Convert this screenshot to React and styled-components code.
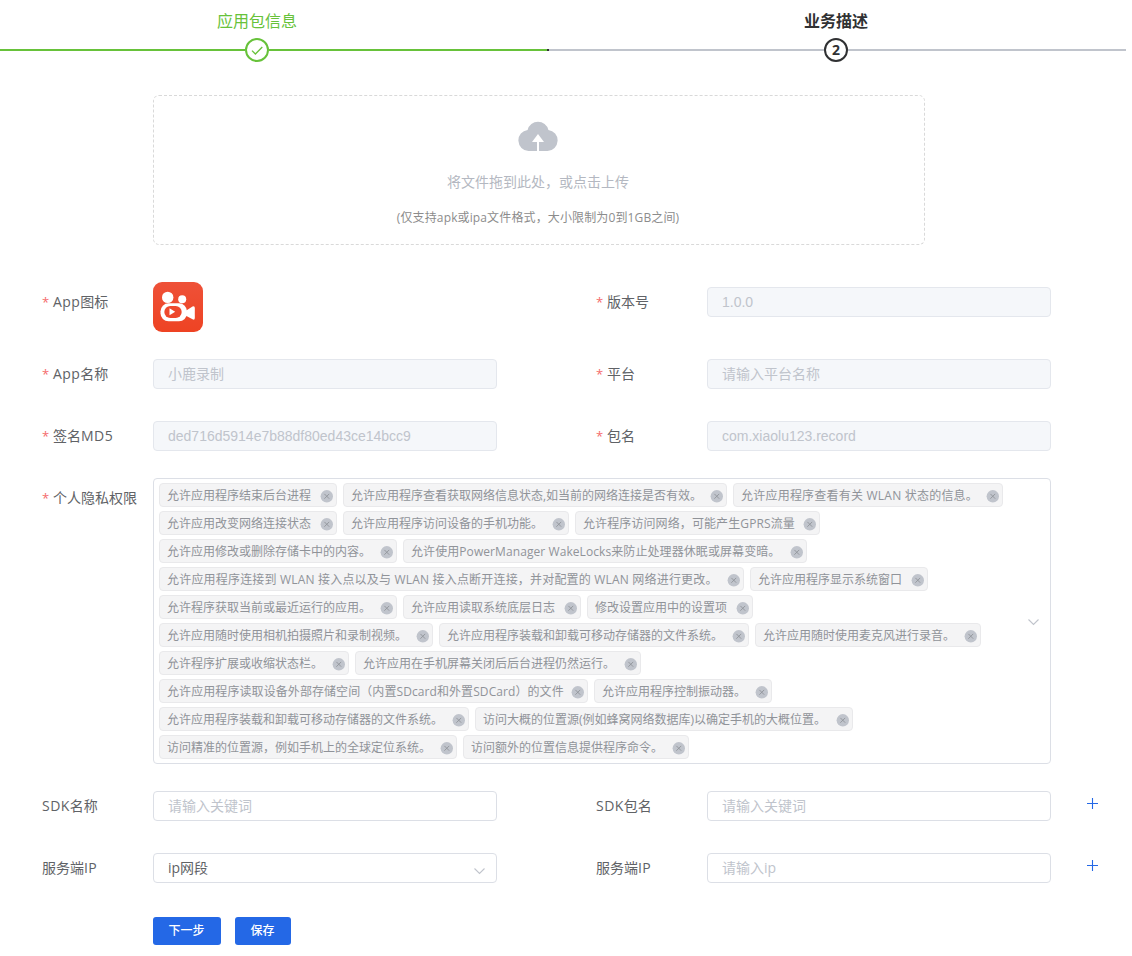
import React from 'react'
import styled, { createGlobalStyle, css } from 'styled-components'

const GlobalStyle = createGlobalStyle`
    * {
      box-sizing: border-box;
    }
    body {
      margin: 0;
      background: #fff;
      color: #606266;
      font-family: "Open Sans", "Noto Sans CJK SC", sans-serif;
      font-size: 14px;
      overflow: hidden;
    }
`

const Page = styled.div`
    width: 1132px;
    height: 956px;
    overflow: hidden;
`

const Steps = styled.div`
    display: flex;
    width: 1158px;
    height: 95px;
    margin-left: -32px;
    padding-top: 9px;
`

const Step = styled.div`
    width: 579px;
    display: flex;
    flex-direction: column;
    align-items: center;
    color: ${(props) => (props.$done ? '#67c23a' : '#303133')};
`

const StepTitle = styled.div`
    height: 24px;
    line-height: 24px;
    padding-right: 1px;
    font-size: 16px;
    font-weight: ${(props) => (props.$bold ? 700 : 400)};
`

const StepTrack = styled.div`
    width: 100%;
    height: 24px;
    margin-top: 5px;
    display: flex;
    align-items: center;
`

const StepLine = styled.div`
    width: ${(props) => (props.$lead ? 277 : 278)}px;
    height: 2px;
    background: ${(props) => (props.$done ? '#67c23a' : '#c0c4cc')};
    border-left: ${(props) => (props.$edge ? '2px solid #303133' : 'none')};
`

const StepCircle = styled.div`
    width: 24px;
    height: 24px;
    border: 2px solid currentColor;
    border-radius: 50%;
    display: flex;
    align-items: center;
    justify-content: center;
    font-size: 14px;
    font-weight: 700;
    line-height: 1;
`

const Upload = styled.div`
    width: 772px;
    height: 150px;
    margin-left: 153px;
    padding-right: 2px;
    border: 1px dashed #d9d9d9;
    border-radius: 6px;
    display: flex;
    flex-direction: column;
    align-items: center;
    svg {
      margin-top: 25px;
    }
`

const UploadText = styled.div`
    margin-top: 20px;
    line-height: 20px;
    color: #b4b8c1;
`

const UploadTip = styled.div`
    margin-top: 16px;
    line-height: 20px;
    font-size: 12px;
    letter-spacing: 0.13px;
    color: #8c8c8c;
`

const Form = styled.div`
    padding: 42px 0 0 42px;
`

const Row = styled.div`
    display: grid;
    grid-template-columns: 111px 344px 99px 111px 344px 40px;
    height: 30px;
    margin-bottom: ${(props) => props.$gap || 32}px;
`

const WideRow = styled.div`
    display: flex;
    margin: -5px 0 27px;
`

const Label = styled.div`
    width: 111px;
    flex: none;
    line-height: 30px;
    white-space: nowrap;
    grid-column: ${(props) => (props.$second ? 4 : 'auto')};
    margin-top: ${(props) => props.$top || 0}px;
    ${(props) => props.$required && css`
      &::before {
        content: "*";
        display: inline-block;
        width: 7px;
        color: #f56c6c;
        font-size: 13px;
        margin-right: 4px;
      }
    `}
`

const Latin = styled.span`
    letter-spacing: 0.45px;
`

const Input = styled.input`
    width: 344px;
    height: 30px;
    padding: ${(props) => (props.$plain ? '0 14px' : '0 14px 2px')};
    border: 1px solid #dcdfe6;
    border-radius: 4px;
    outline: none;
    background: #fff;
    color: #606266;
    font-family: ${(props) => (props.$plain ? '"Liberation Sans", ' : '"Open Sans", ')}"Noto Sans CJK SC", sans-serif;
    font-size: 14px;
    &::placeholder {
      color: #c0c4cc;
      opacity: 1;
    }
    &:disabled {
      background: #f5f7fa;
      border-color: #e4e7ed;
      color: #c0c4cc;
    }
`

const Select = styled.div`
    height: 30px;
    padding: 0 10px 0 14px;
    line-height: 28px;
    border: 1px solid #dcdfe6;
    border-radius: 4px;
    display: flex;
    justify-content: space-between;
    svg {
      margin-top: 10px;
    }
`

const TagBox = styled.div`
    width: 898px;
    height: 286px;
    padding: 4px 10px 4px 5px;
    border: 1px solid #dcdfe6;
    border-radius: 4px;
    display: flex;
    align-items: center;
`

const Tags = styled.div`
    flex: 1;
    display: flex;
    flex-wrap: wrap;
    gap: 4px 6px;
    margin-right: 13px;
`

const Tag = styled.div`
    width: ${(props) => props.$width}px;
    height: 24px;
    padding: 2px 3px 0 7px;
    border: 1px solid #e9e9eb;
    border-radius: 4px;
    background: #f4f4f5;
    color: #909399;
    display: flex;
    align-items: center;
    justify-content: space-between;
    font-size: 12px;
    line-height: 20px;
    white-space: pre;
    letter-spacing: ${(props) => props.$spacing || 0}px;
`

const AddButton = styled.div`
    padding: 7px 0 0 36px;
    line-height: 0;
`

const Buttons = styled.div`
    display: flex;
    gap: 14px;
    margin: 34px 0 0 111px;
`

const Button = styled.button`
    width: ${(props) => props.$width}px;
    height: 28px;
    padding: 0 1px 2px 0;
    border: none;
    border-radius: 3px;
    background: #2468e6;
    color: #fff;
    font-family: "Open Sans", "Noto Sans CJK SC", sans-serif;
    font-size: 12px;
    font-weight: 500;
    cursor: pointer;
`

const tags = [
  { text: '允许应用程序结束后台进程', width: 178 },
  { text: '允许应用程序查看获取网络信息状态,如当前的网络连接是否有效。', width: 384 },
  { text: '允许应用程序查看有关 WLAN 状态的信息。', width: 270, spacing: 0.22 },
  { text: '允许应用改变网络连接状态', width: 178 },
  { text: '允许应用程序访问设备的手机功能。', width: 226 },
  { text: '允许程序访问网络，可能产生GPRS流量', width: 245, spacing: 0.1 },
  { text: '允许应用修改或删除存储卡中的内容。', width: 238 },
  { text: '允许使用PowerManager WakeLocks来防止处理器休眠或屏幕变暗。', width: 404, spacing: 0.08 },
  { text: '允许应用程序连接到 WLAN 接入点以及与 WLAN 接入点断开连接，并对配置的 WLAN 网络进行更改。', width: 585, spacing: 0.19 },
  { text: '允许应用程序显示系统窗口', width: 178 },
  { text: '允许程序获取当前或最近运行的应用。', width: 238 },
  { text: '允许应用读取系统底层日志', width: 178 },
  { text: '修改设置应用中的设置项', width: 166 },
  { text: '允许应用随时使用相机拍摄照片和录制视频。', width: 274 },
  { text: '允许应用程序装载和卸载可移动存储器的文件系统。', width: 310 },
  { text: '允许应用随时使用麦克风进行录音。', width: 226 },
  { text: '允许程序扩展或收缩状态栏。', width: 190 },
  { text: '允许应用在手机屏幕关闭后后台进程仍然运行。', width: 286 },
  { text: '允许应用程序读取设备外部存储空间（内置SDcard和外置SDCard）的文件', width: 429, spacing: 0.08 },
  { text: '允许应用程序控制振动器。', width: 178 },
  { text: '允许应用程序装载和卸载可移动存储器的文件系统。', width: 310 },
  { text: '访问大概的位置源(例如蜂窝网络数据库)以确定手机的大概位置。', width: 378 },
  { text: '访问精准的位置源，例如手机上的全球定位系统。', width: 298 },
  { text: '访问额外的位置信息提供程序命令。', width: 226 },
]

const CheckIcon = () => (
  <svg width="14" height="14" viewBox="0 0 14 14" fill="none" stroke="currentColor" strokeWidth="1.3">
    <path d="M2 7.6 L5.4 11 L12.3 4" />
  </svg>
)

const CloudIcon = () => (
  <svg width="40" height="31" viewBox="0 0 40 31">
    <path
      fill="#c0c4cc"
      d="M10.5 30 A10.6 10.6 0 0 1 9.6 8.9 A10.7 10.7 0 0 1 30.4 8.9 A10.6 10.6 0 0 1 29.5 30 H21 V21 H26 L20 13 L14 21 H19 V30 Z"
    />
  </svg>
)

const CloseIcon = () => (
  <svg width="13" height="13" viewBox="0 0 13 13">
    <circle cx="6.8" cy="6.3" r="6.2" fill="#c0c4cc" />
    <path d="M4.4 3.9 L9.2 8.7 M9.2 3.9 L4.4 8.7" stroke="#909399" strokeWidth="0.9" />
  </svg>
)

const ArrowIcon = () => (
  <svg width="13" height="13" viewBox="0 0 13 13" fill="none" stroke="#c0c4cc" strokeWidth="1.1">
    <path d="M1.5 4.5 L6.5 9.5 L11.5 4.5" />
  </svg>
)

const PlusIcon = () => (
  <svg width="12" height="12" viewBox="0 0 12 12" stroke="#2468e6" strokeWidth="1.1">
    <path d="M5.5 0 V11 M0 5.5 H11" />
  </svg>
)

const AppLogo = () => (
  <svg width="50" height="50" viewBox="0 0 50 50">
    <defs>
      <linearGradient id="logo" x1="0" y1="0" x2="0" y2="1">
        <stop offset="0" stopColor="#ee5138" />
        <stop offset="1" stopColor="#ee4323" />
      </linearGradient>
    </defs>
    <rect width="50" height="50" rx="9" fill="url(#logo)" />
    <g fill="#fff">
      <circle cx="14.7" cy="15.4" r="5.7" />
      <circle cx="29.2" cy="17.3" r="4" />
      <rect x="7.5" y="21.3" width="26.5" height="18" rx="8" />
      <path d="M32.5 29 L39.5 24.5 Q41.8 23.6 41.8 26 V36 Q41.8 38.4 39.5 37.3 L32.5 33.5 Z" />
    </g>
    <rect x="11.3" y="24" width="17.4" height="12" rx="6" fill="#ee482c" />
    <path d="M16.5 26.2 L22.2 29.7 L16.5 33.2 Z" fill="#fff" />
  </svg>
)

const App = () => {
  return (
    <Page>
      <GlobalStyle />

      <Steps>
        <Step $done>
          <StepTitle>应用包信息</StepTitle>
          <StepTrack>
            <StepLine $done $lead />
            <StepCircle><CheckIcon /></StepCircle>
            <StepLine $done />
          </StepTrack>
        </Step>
        <Step>
          <StepTitle $bold>业务描述</StepTitle>
          <StepTrack>
            <StepLine $edge $lead />
            <StepCircle>2</StepCircle>
            <StepLine />
          </StepTrack>
        </Step>
      </Steps>

      <Upload>
        <CloudIcon />
        <UploadText>将文件拖到此处，或点击上传</UploadText>
        <UploadTip>(仅支持apk或ipa文件格式，大小限制为0到1GB之间)</UploadTip>
      </Upload>

      <Form>
        <Row $gap={42}>
          <Label $required><Latin>App</Latin>图标</Label>
          <WideRow><AppLogo /></WideRow>
          <Label $required $second>版本号</Label>
          <Input $plain disabled value="1.0.0" />
        </Row>
        <Row>
          <Label $required><Latin>App</Latin>名称</Label>
          <Input disabled value="小鹿录制" />
          <Label $required $second>平台</Label>
          <Input disabled placeholder="请输入平台名称" />
        </Row>
        <Row>
          <Label $required>签名<Latin>MD5</Latin></Label>
          <Input $plain disabled value="ded716d5914e7b88df80ed43ce14bcc9" />
          <Label $required $second>包名</Label>
          <Input $plain disabled value="com.xiaolu123.record" />
        </Row>

        <WideRow>
          <Label $required $top={5}>个人隐私权限</Label>
          <TagBox>
            <Tags>
              {tags.map((tag, index) => (
                <Tag key={index} $width={tag.width} $spacing={tag.spacing}>
                  {tag.text}
                  <CloseIcon />
                </Tag>
              ))}
            </Tags>
            <ArrowIcon />
          </TagBox>
        </WideRow>

        <Row>
          <Label><Latin>SDK</Latin>名称</Label>
          <Input placeholder="请输入关键词" />
          <Label $second><Latin>SDK</Latin>包名</Label>
          <Input placeholder="请输入关键词" />
          <AddButton><PlusIcon /></AddButton>
        </Row>
        <Row>
          <Label>服务端<Latin>IP</Latin></Label>
          <Select>
            ip网段
            <ArrowIcon />
          </Select>
          <Label $second>服务端<Latin>IP</Latin></Label>
          <Input placeholder="请输入ip" />
          <AddButton><PlusIcon /></AddButton>
        </Row>

        <Buttons>
          <Button $width={68}>下一步</Button>
          <Button $width={56}>保存</Button>
        </Buttons>
      </Form>
    </Page>
  )
}

export default App
